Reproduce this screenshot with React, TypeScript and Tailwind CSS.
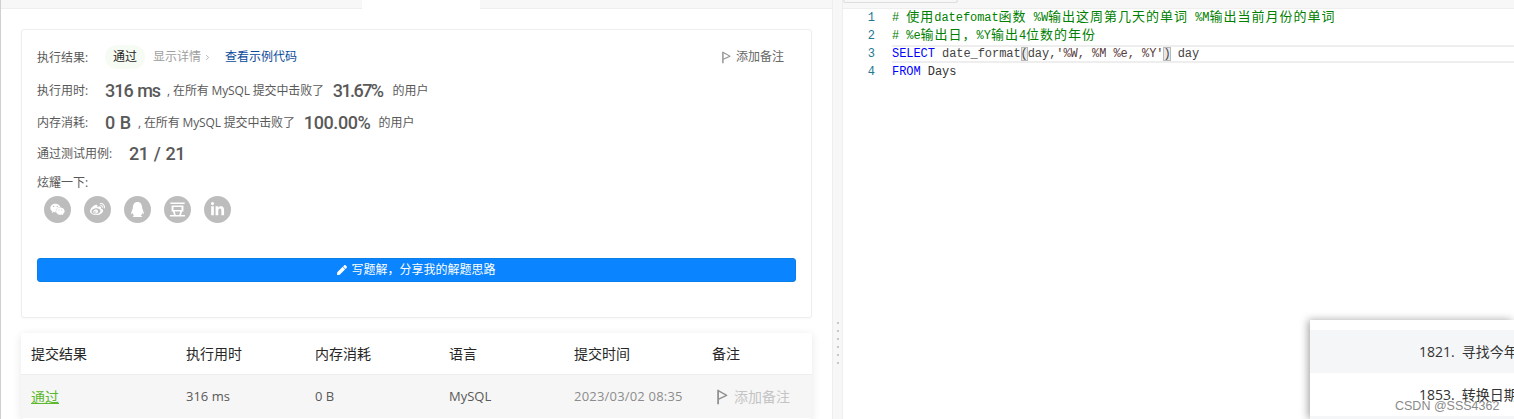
import type { ReactNode } from 'react';
import { FaWeixin, FaWeibo, FaQq, FaLinkedinIn, FaPen } from 'react-icons/fa';
import { SiDouban } from 'react-icons/si';
import { ChevronRight } from 'lucide-react';

const SANS = "font-['Open_Sans','Noto_Sans_CJK_SC',sans-serif]";

function FlagIcon({ className }: { className: string }) {
  return (
    <svg viewBox="0 0 10 14" className={className} fill="none" stroke="currentColor">
      <path d="M1 0.5V13.5" strokeWidth="1.6" />
      <path d="M1.5 1.5L8.8 5.5L1.5 9" strokeWidth="1.2" strokeLinejoin="round" />
    </svg>
  );
}

function Label({ children, width = 'w-[68px]' }: { children: ReactNode; width?: string }) {
  return <span className={`${width} shrink-0 pt-[2px] text-[12px] text-[#595959]`}>{children}</span>;
}

function Big({ children, className = '' }: { children: ReactNode; className?: string }) {
  return (
    <span className={`font-['Roboto','Noto_Sans_CJK_SC',sans-serif] text-[18px] font-medium text-[#595959] ${className}`}>
      {children}
    </span>
  );
}

function StatRow({
  label,
  value,
  pct,
  valueClass,
  pctClass,
}: {
  label: string;
  value: string;
  pct: string;
  valueClass: string;
  pctClass: string;
}) {
  return (
    <div className="flex h-[32px] items-center">
      <Label>{label}</Label>
      <Big className={valueClass}>{value}</Big>
      <span className="ml-[7px] pt-[2px] text-[12px] tracking-[-0.15px] text-[#595959]">, 在所有 MySQL 提交中击败了</span>
      <Big className={`ml-[9px] ${pctClass}`}>{pct}</Big>
      <span className="pt-[2px] text-[12px] text-[#595959]">的用户</span>
    </div>
  );
}

function ResultCard() {
  const shares = [FaWeixin, FaWeibo, FaQq, SiDouban, FaLinkedinIn];
  return (
    <div className="h-[289px] rounded-[3px] border border-[#eeeeee] bg-white px-[15px] pt-[15px] shadow-[0_1px_2px_rgba(0,0,0,0.03)]">
      <div className="flex h-[24px] items-center">
        <Label>执行结果:</Label>
        <span className="flex h-[24px] w-[40px] items-center justify-center rounded-full bg-[#f6fbf3] text-[12px] text-[#262626]">
          通过
        </span>
        <span className="ml-[8px] text-[12px] text-[#a0a0a0]">显示详情</span>
        <ChevronRight size={9} strokeWidth={2} className="ml-[2px] text-[#a0a0a0]" />
        <span className="ml-[13px] text-[12px] text-[#0a4a9a]">查看示例代码</span>
        <div className="ml-auto mr-[12px] flex items-center gap-[5px] text-[12px] text-[#666666]">
          <FlagIcon className="h-[13px] w-[9px] text-[#909090]" />
          添加备注
        </div>
      </div>
      <div className="mt-[5px]">
        <StatRow
          label="执行用时:"
          value="316 ms"
          pct="31.67%"
          valueClass="tracking-[-1px] [word-spacing:1px]"
          pctClass="mr-[10px] tracking-[-1.6px]"
        />
        <StatRow label="内存消耗:" value="0 B" pct="100.00%" valueClass="" pctClass="mr-[8px] tracking-[-0.4px]" />
        <div className="flex h-[30px] items-center">
          <Label width="w-[92px]">通过测试用例:</Label>
          <Big className="tracking-[-0.4px] [word-spacing:1px]">21 / 21</Big>
        </div>
      </div>
      <div className="mt-[5px] text-[12px] leading-[20px] text-[#595959]">炫耀一下:</div>
      <div className="ml-[7px] mt-[3px] flex gap-[13px]">
        {shares.map((Icon, i) => (
          <div key={i} className="flex h-[27px] w-[27px] items-center justify-center rounded-full bg-[#bdbdbd] text-[15px] text-white">
            <Icon />
          </div>
        ))}
      </div>
      <button className="mt-[35px] flex h-[24px] w-[759px] items-center justify-center gap-[4px] rounded-[3px] border border-[#0a7fe8] bg-[#0a84ff] text-[12px] text-white">
        <FaPen className="text-[10px]" />
        写题解，分享我的解题思路
      </button>
    </div>
  );
}

function SubmissionTable() {
  const grid = 'grid grid-cols-[155px_129px_134px_125px_138px_110px] items-center px-[10px]';
  return (
    <div className="mt-[15px] h-[86px] rounded-[3px] bg-white shadow-[0_2px_10px_rgba(0,0,0,0.1)]">
      <div className={`${grid} h-[42px] border-b border-[#eeeeee] text-[14px] text-[#262626]`}>
        <span>提交结果</span>
        <span>执行用时</span>
        <span>内存消耗</span>
        <span>语言</span>
        <span>提交时间</span>
        <span>备注</span>
      </div>
      <div className={`${grid} h-[43px] bg-[#f6f6f6] text-[13px] text-[#595959]`}>
        <span className="text-[14px] text-[#5cb82c] underline underline-offset-1">通过</span>
        <span>316 ms</span>
        <span>0 B</span>
        <span>MySQL</span>
        <span className="tracking-[0.2px] text-[#8c8c8c]">2023/03/02 08:35</span>
        <span className="ml-[5px] flex items-center gap-[6px] text-[14px] text-[#c4c4c4]">
          <FlagIcon className="h-[16px] w-[11px] text-[#909090]" />
          添加备注
        </span>
      </div>
    </div>
  );
}

function Cjk({ children }: { children: ReactNode }) {
  return <span className="font-['Noto_Sans_CJK_SC',sans-serif] text-[13px] leading-[0] tracking-[1px]">{children}</span>;
}

function CodeLine({ n, children, active }: { n: number; children: ReactNode; active?: boolean }) {
  return (
    <div className="flex h-[18px]">
      <span className="w-[32px] shrink-0 text-right leading-[18px] text-[#237893]">{n}</span>
      <div
        className={`ml-[17px] h-[18px] flex-1 whitespace-pre ${
          active ? 'border-y-2 border-[#eeeeee] leading-[14px]' : 'leading-[18px]'
        }`}
      >
        {children}
      </div>
    </div>
  );
}

function Bracket({ children }: { children: string }) {
  return <span className="bg-[#e8e8e8] shadow-[inset_0_0_0_1px_#b9b9b9]">{children}</span>;
}

function Editor() {
  return (
    <div className="flex min-w-0 flex-1 flex-col bg-white">
      <div className="h-[9px] border-b border-[#eeeeee] bg-[#f7f7f7]">
        <div className="h-[3px] w-[115px] rounded-b-[3px] border border-t-0 border-[#dddddd]" />
      </div>
      <div className="font-['Liberation_Mono',monospace] text-[12px] tracking-[-0.06px] text-[#444444]">
        <CodeLine n={1}>
          <span className="text-[#008000]">
            # <Cjk>使用</Cjk>datefomat<Cjk>函数</Cjk> %W<Cjk>输出这周第几天的单词</Cjk> %M<Cjk>输出当前月份的单词</Cjk>
          </span>
        </CodeLine>
        <CodeLine n={2}>
          <span className="text-[#008000]">
            # %e<Cjk>输出日，</Cjk>%Y<Cjk>输出</Cjk>4<Cjk>位数的年份</Cjk>
          </span>
        </CodeLine>
        <CodeLine n={3} active>
          <span className="text-[#0000ff]">SELECT</span> date_format<Bracket>(</Bracket>day,
          <span className="text-[#5a3a3a]">'%W, %M %e, %Y'</span>
          <Bracket>)</Bracket> day
        </CodeLine>
        <CodeLine n={4}>
          <span className="text-[#0000ff]">FROM</span> <span className="text-[#333333]">Days</span>
        </CodeLine>
      </div>
    </div>
  );
}

function ProblemPopover() {
  return (
    <div className="absolute left-[1310px] top-[320px] h-[99px] w-[204px] bg-white pt-[10px] text-[14px] text-[#333333] shadow-[-2px_0_8px_rgba(0,0,0,0.35)]">
      <div className="flex h-[43px] items-center whitespace-nowrap bg-[#f5f6f8] pl-[109px]">
        <span className="mr-[7px]">1821.</span>
        寻找今年具有正收入的客户
      </div>
      <div className="flex h-[43px] items-center whitespace-nowrap pl-[109px]">
        <span className="mr-[7px]">1853.</span>
        转换日期格式
      </div>
      <div className="h-[3px] bg-[#f5f6f8]" />
    </div>
  );
}

export default function App() {
  return (
    <div className={`relative flex h-[419px] w-[1514px] overflow-hidden bg-white ${SANS}`}>
      <div className="w-[1px] shrink-0 bg-[#d0d0d0]" />
      <div className="w-[831px] shrink-0">
        <div className="flex h-[9px]">
          <div className="w-[361px] border-b border-[#eeeeee] bg-[#f7f7f7]" />
          <div className="w-[118px]" />
          <div className="flex-1 border-b border-[#eeeeee] bg-[#f7f7f7]" />
        </div>
        <div className="px-[20px] pt-[20px]">
          <ResultCard />
          <SubmissionTable />
        </div>
      </div>
      <div className="flex w-[11px] shrink-0 flex-col items-center gap-[6px] border-x border-[#eeeeee] bg-[#f7f7f7] pt-[322px]">
        {[0, 1, 2, 3, 4, 5].map((i) => (
          <div key={i} className="h-[2px] w-[2px] bg-[#c8c8c8]" />
        ))}
      </div>
      <Editor />
      <ProblemPopover />
      <span className="absolute left-[1395px] top-[397px] font-['Liberation_Sans',sans-serif] text-[12.5px] text-[#8a8a8a]">
        CSDN @SSS4362
      </span>
    </div>
  );
}
